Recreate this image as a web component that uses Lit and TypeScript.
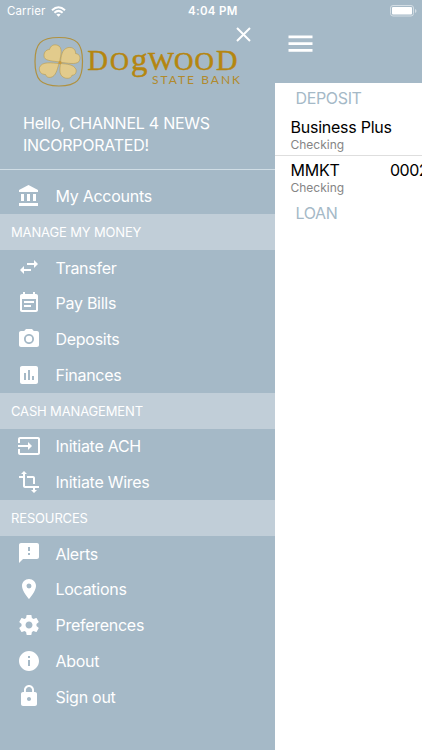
import { LitElement, html, css, svg } from "lit";
import { customElement } from "lit/decorators.js";

const ICONS: Record<string, string> = {
  bank: "M4 10v7h3v-7H4zm6 0v7h3v-7h-3zM2 22h19v-3H2v3zm14-12v7h3v-7h-3zm-4.500-9L2 6v2h19V6l-9.500-5z",
  transfer: "M6.990 11L3 15l3.990 4v-3H14v-2H6.990v-3zM21 9l-3.990-4v3H10v2h7.010v3L21 9z",
  bills: "M17 10H7v2h10v-2zm2-7h-1V1h-2v2H8V1H6v2H5c-1.110 0-1.990.9-1.990 2L3 19c0 1.100.89 2 2 2h14c1.100 0 2-.9 2-2V5c0-1.100-.9-2-2-2zm0 16H5V8h14v11zm-5-5H7v2h7v-2z",
  camera: "M9 2L7.170 4H4c-1.100 0-2 .9-2 2v12c0 1.100.9 2 2 2h16c1.100 0 2-.9 2-2V6c0-1.100-.9-2-2-2h-3.170L15 2H9zm3 15c-2.760 0-5-2.240-5-5s2.240-5 5-5 5 2.240 5 5-2.240 5-5 5zM12 8.800a3.200 3.200 0 1 0 0 6.400 3.200 3.200 0 0 0 0-6.400z",
  chart: "M19 3H5c-1.100 0-2 .9-2 2v14c0 1.100.9 2 2 2h14c1.100 0 2-.9 2-2V5c0-1.100-.9-2-2-2zM9 17H7v-7h2v7zm4 0h-2V7h2v10zm4 0h-2v-4h2v4z",
  input: "M21 3.010H3c-1.100 0-2 .9-2 2V9h2V4.990h18v14.030H3V15H1v4.010c0 1.100.9 1.980 2 1.980h18c1.100 0 2-.88 2-1.980v-14c0-1.110-.9-2-2-2zM11 16l4-4-4-4v3H1v2h10v3z",
  wires: "M22 18v-2H8V4h2L7 1 4 4h2v2H2v2h4v8c0 1.100.9 2 2 2h8v2h-2l3 3 3-3h-2v-2h4zM10 8h6v6h2V8c0-1.100-.9-2-2-2h-6v2z",
  alert: "M20 2H4c-1.100 0-1.990.9-1.990 2L2 22l4-4h14c1.100 0 2-.9 2-2V4c0-1.100-.9-2-2-2zm-7 12h-2v-2h2v2zm0-4h-2V6h2v4z",
  pin: "M12 2C8.130 2 5 5.130 5 9c0 5.250 7 13 7 13s7-7.750 7-13c0-3.870-3.130-7-7-7zm0 9.500a2.500 2.500 0 0 1 0-5 2.500 2.500 0 0 1 0 5z",
  gear: "M19.430 12.980c.04-.32.07-.64.07-.98s-.03-.66-.07-.98l2.110-1.650c.19-.15.24-.42.12-.64l-2-3.460c-.12-.22-.39-.3-.61-.22l-2.490 1c-.52-.4-1.080-.73-1.690-.98l-.38-2.650C14.460 2.180 14.250 2 14 2h-4c-.25 0-.46.18-.49.42l-.38 2.650c-.61.25-1.170.59-1.690.98l-2.490-1c-.23-.09-.49 0-.61.22l-2 3.460c-.13.22-.07.49.12.64l2.110 1.650c-.04.32-.07.65-.07.98s.03.66.07.98l-2.110 1.650c-.19.15-.24.42-.12.64l2 3.460c.12.22.39.3.61.22l2.490-1c.52.4 1.080.73 1.690.98l.38 2.650c.03.24.24.42.49.42h4c.25 0 .46-.18.49-.42l.38-2.650c.61-.25 1.170-.59 1.690-.98l2.490 1c.23.09.49 0 .61-.22l2-3.460c.12-.22.07-.49-.12-.64l-2.110-1.650zM12 15.500c-1.930 0-3.500-1.570-3.500-3.500s1.570-3.500 3.500-3.500 3.500 1.570 3.500 3.500-1.570 3.500-3.500 3.500z",
  info: "M12 2C6.480 2 2 6.480 2 12s4.480 10 10 10 10-4.480 10-10S17.520 2 12 2zm1 15h-2v-6h2v6zm0-8h-2V7h2v2z",
  lock: "M18 8h-1V6c0-2.760-2.240-5-5-5S7 3.240 7 6v2H6c-1.100 0-2 .9-2 2v10c0 1.100.9 2 2 2h12c1.100 0 2-.9 2-2V10c0-1.100-.9-2-2-2zm-6 9c-1.100 0-2-.9-2-2s.9-2 2-2 2 .9 2 2-.9 2-2 2zm3.100-9H8.900V6c0-1.710 1.390-3.100 3.100-3.100s3.100 1.390 3.100 3.100v2z",
};

type Row = { label: string; icon?: string };
const ROWS: Row[] = [
  { label: "My Accounts", icon: "bank" },
  { label: "MANAGE MY MONEY" },
  { label: "Transfer", icon: "transfer" },
  { label: "Pay Bills", icon: "bills" },
  { label: "Deposits", icon: "camera" },
  { label: "Finances", icon: "chart" },
  { label: "CASH MANAGEMENT" },
  { label: "Initiate ACH", icon: "input" },
  { label: "Initiate Wires", icon: "wires" },
  { label: "RESOURCES" },
  { label: "Alerts", icon: "alert" },
  { label: "Locations", icon: "pin" },
  { label: "Preferences", icon: "gear" },
  { label: "About", icon: "info" },
  { label: "Sign out", icon: "lock" },
];

@customElement("bank-logo")
export class BankLogo extends LitElement {
  static styles = css`
    :host { display: block; width: 212px; height: 56px; }
    svg { display: block; overflow: visible; }
    .name { font-family: "Liberation Serif", serif; fill: #b5860f; stroke: #b5860f; stroke-width: 0.5; }
    .sub { font-family: Lato, sans-serif; font-size: 12px; fill: #b18a2c; }
  `;
  render() {
    return html`<svg width="212" height="56" viewBox="32 35 212 56">
      <path d="M59 37.500C77 37.500 82.500 43 82.500 61.500S77 86 59 86 35 80 35 61.500 41 37.500 59 37.500z" fill="none" stroke="#b0913f" stroke-width="1.200" />
      <g fill="#e2cb8c" stroke="#b99a4c" stroke-width=".6" stroke-linejoin="round">
        <path d="M59.500 62C53 61 46 61 44.300 57.500C43 53 46 49.500 49.500 49.500C50.500 45.500 54 44 57.500 45.300C63 47 61 55 59.500 62z" />
        <path d="M60.500 62.300C61 56 62 49 68 47.600C73 46.700 76 50 75.500 53.500C80 54 81 58 79 61.500C76 65 67 63 60.500 62.300z" />
        <path d="M60.500 63.500C67 64 74 64.500 76 69.500C77 73.500 74 75.500 72 75.200C71 79 66 79 63 77C58.500 74 60 68 60.500 63.500z" />
        <path d="M59 63.500C57 70 56 76 51 77.300C48 78 46 76.500 45.500 74.500C41 74.500 38.500 71 39.500 67.500C42 61 52 63 59 63.500z" />
      </g>
      <circle cx="60" cy="62.700" r="1.600" fill="#c99a3c" />
      <g class="name">
        ${[
          ["D", 87.5, 70, 30, 20.5],
          ["O", 110, 70.3, 26, 19],
          ["g", 131, 70, 32, 16.5],
          ["W", 148, 70.3, 25.5, 26],
          ["O", 174, 70.3, 26, 19.5],
          ["O", 194.5, 70.3, 26, 19.5],
          ["D", 216, 70, 30, 21.5],
        ].map(([c, x, y, s, w]) => svg`<text x=${x} y=${y} font-size=${s} textLength=${w} lengthAdjust="spacingAndGlyphs">${c}</text>`)}
      </g>
      <text class="sub" x="152" y="84" textLength="88" lengthAdjust="spacing">STATE BANK</text>
    </svg>`;
  }
}

@customElement("app-root")
export class AppRoot extends LitElement {
  static styles = css`
    :host { display: block; width: 422px; height: 750px; overflow: hidden; background: #a5b9c7; font-family: Inter, sans-serif; color: #fff; }
    * { box-sizing: border-box; }
    .page { display: grid; grid-template-columns: 275px 147px; grid-template-rows: 22px 728px; }
    .status { grid-column: 1 / 3; display: grid; grid-template-columns: 1fr auto 1fr; align-items: center; font-size: 11.500px; padding: 0 5px 0 7px; }
    .left { display: flex; align-items: center; gap: 5.500px; letter-spacing: 0.100px; }
    .clock { font-weight: 600; letter-spacing: 0.300px; padding-left: 1.500px; }
    .right { display: flex; justify-content: flex-end; }
    svg { display: block; }
    .top { height: 69px; padding: 13px 0 0 32px; position: relative; }
    .close { position: absolute; left: 236px; top: 5px; }
    .hello { height: 79px; padding: 22px 0 0 23px; font-size: 16px; line-height: 21.500px; border-bottom: 1px solid #d0dde5; letter-spacing: -0.250px; }
    .menu { padding-top: 8.500px; }
    .row { height: 35.740px; display: flex; align-items: center; padding-left: 16.500px; gap: 15px; font-size: 16px; letter-spacing: -0.270px; }
    .row span { padding-bottom: 0.300px; }
    .row svg { fill: #fff; margin-top: -0.800px; }
    .section { height: 35.740px; display: flex; align-items: center; padding-left: 11px; font-size: 13px; letter-spacing: -0.150px; background: #c1ced8; }
    .main { display: flex; flex-direction: column; }
    .bar { height: 61px; padding: 13px 0 0 13px; }
    .content { flex: 1; background: #fff; color: #000; overflow: hidden; }
    .head { font-size: 16px; line-height: 20px; color: #a5b9c7; padding-left: 20.500px; letter-spacing: -0.350px; }
    .head.first { padding-top: 5px; height: 32px; }
    .head.last { padding-top: 4.400px; }
    .account { padding: 2px 0 0 15.500px; height: 41px; white-space: nowrap; }
    .account.lined { border-bottom: 1px solid #dedede; }
    .account.next { padding-top: 4px; height: 43px; }
    .line { display: flex; font-size: 16px; line-height: 20px; letter-spacing: -0.250px; }
    .code { width: 99.500px; flex: none; }
    .number { letter-spacing: -0.500px; }
    .kind { font-size: 12px; line-height: 15px; color: #858585; }
  `;
  render() {
    return html`<div class="page">
      <div class="status">
        <div class="left"><span>Carrier</span>
          <svg width="15" height="11" viewBox="0 0 15 11" fill="none" stroke="#fff" stroke-width="2"><path d="M1 4.200Q7.500-1.800 14 4.200M3.400 6.800Q7.500 3 11.600 6.800" /><path d="M7.500 10.700L5.300 8.500Q7.500 6.800 9.700 8.500z" fill="#fff" stroke="none" /></svg>
        </div>
        <div class="clock">4:04 PM</div>
        <div class="right"><svg width="27" height="12" viewBox="0 0 27 12"><rect x=".5" y=".5" width="23" height="10.500" rx="2.500" fill="none" stroke="#d3dde4" /><rect x="2" y="2" width="20" height="7.500" rx="1" fill="#fff" /><path d="M25 4v4q1.500-.6 1.500-2T25 4z" fill="#d3dde4" /></svg></div>
      </div>
      <nav>
        <div class="top"><bank-logo></bank-logo>
          <svg class="close" width="15" height="15" viewBox="0 0 15 15" stroke="#fff" stroke-width="2"><path d="M1 1l13 13M14 1L1 14" /></svg>
        </div>
        <div class="hello">Hello, CHANNEL 4 NEWS<br />INCORPORATED!</div>
        <div class="menu">
          ${ROWS.map((r) => r.icon
            ? html`<div class="row"><svg width="24" height="24" viewBox="0 0 24 24"><path fill-rule="evenodd" d=${ICONS[r.icon]} /></svg><span>${r.label}</span></div>`
            : html`<div class="section">${r.label}</div>`)}
        </div>
      </nav>
      <div class="main">
        <div class="bar"><svg width="25" height="18" viewBox="0 0 25 18" fill="#fff"><path d="M.5.500h24v2.700H.5zM.5 7.200h24v2.700H.5zM.5 14h24v2.700H.5z" /></svg></div>
        <div class="content">
          <div class="head first">DEPOSIT</div>
          <div class="account lined"><div class="line">Business Plus</div><div class="kind">Checking</div></div>
          <div class="account next"><div class="line"><span class="code">MMKT</span><span class="number">0002</span></div><div class="kind">Checking</div></div>
          <div class="head last">LOAN</div>
        </div>
      </div>
    </div>`;
  }
}
